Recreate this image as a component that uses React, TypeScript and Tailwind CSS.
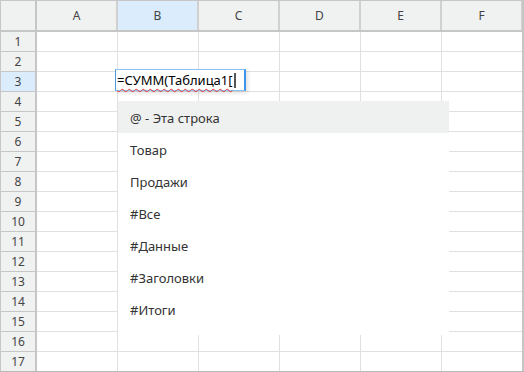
const cols = ['A', 'B', 'C', 'D', 'E', 'F'];
const rows = Array.from({ length: 17 }, (_, i) => i + 1);
const items = ['@ - Эта строка', 'Товар', 'Продажи', '#Все', '#Данные', '#Заголовки', '#Итоги'];

const App = () => {
  return (
    <div className="relative w-[524px] h-[372px] overflow-hidden bg-white font-['Noto_Sans',sans-serif] text-[#333]">
      <div className="border-t border-l border-[#c6c6c6]">
        {/* column headers */}
        <div className="flex h-[31px] border-b-2 border-[#c6c6c6] bg-[#f0f1f1]">
          <div className="w-[36px] border-r-2 border-[#c6c6c6]" />
          {cols.map((c) => (
            <div
              key={c}
              className={`w-[81px] flex items-center justify-center border-r-2 border-[#d0d0d0] text-[12px] text-[#444] ${c === 'B' ? 'bg-[#dbedfc]' : ''}`}
            >
              {c}
            </div>
          ))}
        </div>
        {rows.map((r) => (
          <div key={r} className="flex h-[20px]">
            <div
              className={`w-[36px] flex items-center justify-center border-r-2 border-b border-[#c6c6c6] text-[12px] text-[#444] ${r === 3 ? 'bg-[#dbedfc]' : 'bg-[#f0f1f1]'}`}
            >
              {r}
            </div>
            {cols.map((c) => (
              <div key={c} className="w-[81px] border-r border-b border-[#e0e0e0]" />
            ))}
          </div>
        ))}
      </div>
      <div className="absolute right-0 top-0 h-full w-[2px] bg-[#c6c6c6]" />
      <div className="absolute left-0 bottom-0 w-full h-px bg-[#b9b9b9]" />

      {/* cell editor */}
      <div className="absolute left-[115px] top-[69px] w-[131px] h-[22px] bg-white border border-[#8cc3f3] border-l-[#4a9be6] border-r-2 border-r-[#3b94e8] shadow-[2px_2px_4px_rgba(0,0,0,0.12)] flex items-center">
        <span className="text-[13px] text-black leading-none pl-[1px] underline decoration-wavy decoration-[#e53935] underline-offset-[3px] decoration-1">
          =СУММ(Таблица1[
        </span>
        <span className="ml-[1px] w-[2px] h-[15px] bg-[#555]" />
      </div>

      {/* autocomplete list */}
      <div className="absolute left-[118px] top-[101px] w-[331px] h-[234px] bg-white">
        {items.map((t, i) => (
          <div
            key={t}
            className={`h-[32px] flex items-center pl-[12px] pt-[3px] text-[13px] text-[#333] ${i === 0 ? 'bg-[#eff0f0]' : ''}`}
          >
            {t}
          </div>
        ))}
      </div>
    </div>
  );
};

export default App;
